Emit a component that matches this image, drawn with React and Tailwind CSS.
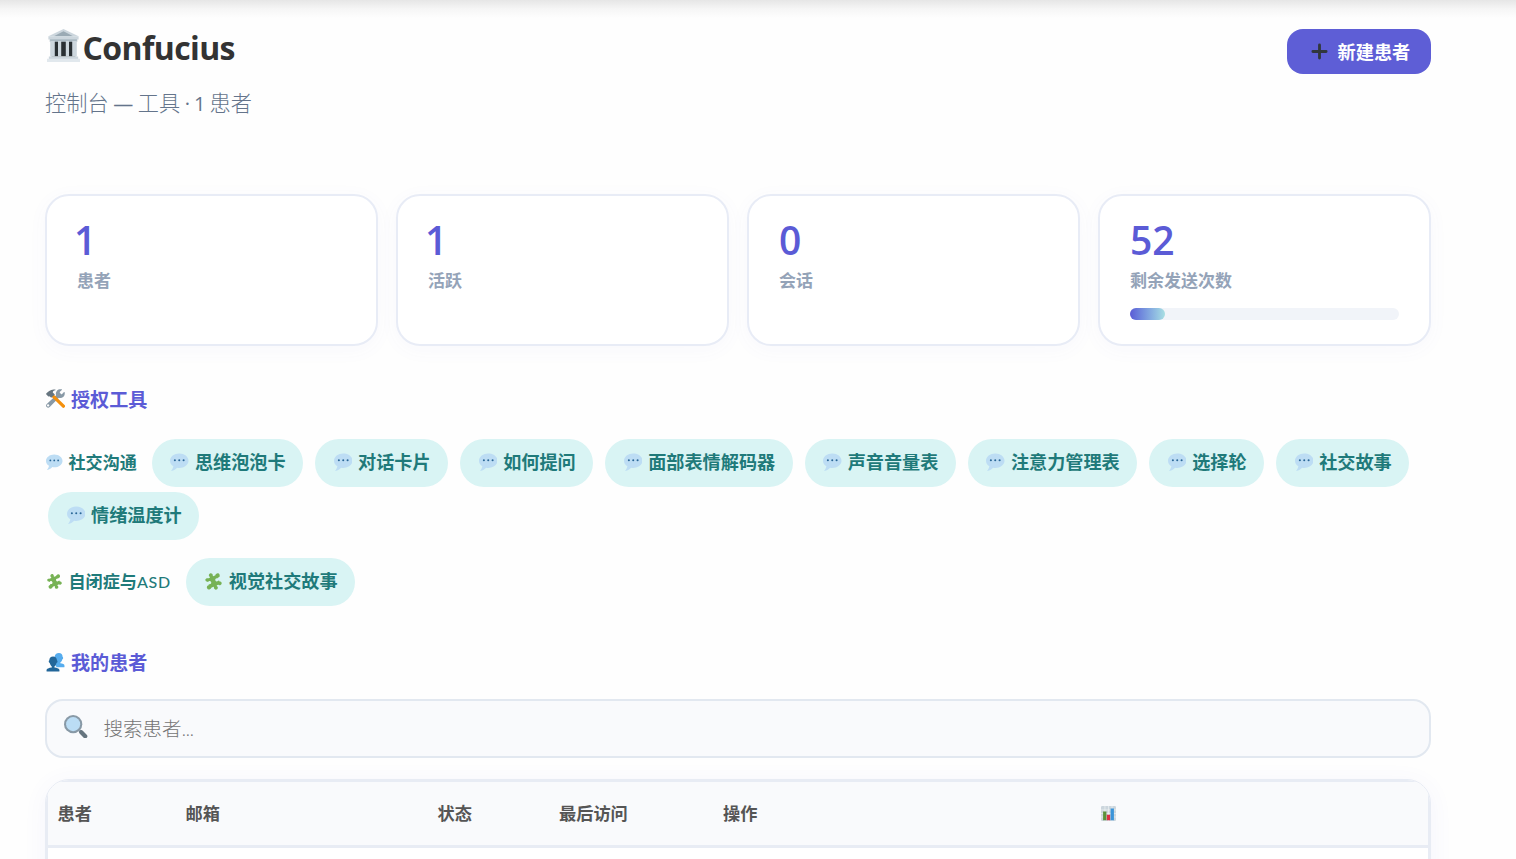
import React from "react";

const Bubble = ({ className }) => (
  <svg viewBox="0 0 36 36" className={className}>
    <path fill="#BDDDF4" d="M18 1C8.059 1 0 7.268 0 15c0 4.368 2.574 8.268 6.604 10.835C6.08 28.144 4.859 31.569 2 35c5.758-.96 9.439-3.761 11.716-6.416 1.376.262 2.805.416 4.284.416 9.941 0 18-6.268 18-14S27.941 1 18 1z" />
    <circle cx="9.5" cy="14" r="2" fill="#2A6797" />
    <circle cx="18" cy="14" r="2" fill="#2A6797" />
    <circle cx="26.5" cy="14" r="2" fill="#2A6797" />
  </svg>
);

const Puzzle = ({ className }) => (
  <svg viewBox="0 0 36 36" className={className}>
    <g fill="#77B255" transform="rotate(-22 18 18)">
      <path d="M7 9h7.500c.8-1 .2-1.600-.1-2.400C13.500 4 15.500 1.500 18 1.500s4.500 2.500 3.600 5.100c-.3.800-.9 1.400-.1 2.400H29v6c-.8.8-1.600.3-2.400 0-2.300-.8-4.100.8-4.100 3s1.800 3.800 4.100 3c.8-.3 1.600-.8 2.400 0v7h-7.500c-.8 1-.2 1.600.1 2.400.9 2.600-1.100 5.100-3.600 5.100s-4.500-2.500-3.600-5.100c.3-.8.9-1.400.1-2.400H7v-7c.8-.8 1.600-.3 2.400 0 2.300.8 4.100-.8 4.100-3s-1.800-3.800-4.100-3c-.8.3-1.600.8-2.400 0z" />
      <circle cx="6" cy="26" r="4.200" />
      <circle cx="30" cy="11" r="4.200" />
      <circle cx="28.500" cy="26.500" r="3.500" />
      <circle cx="7.500" cy="11" r="3" />
    </g>
  </svg>
);

const Tools = ({ className }) => (
  <svg viewBox="0 0 36 36" className={className}>
    <path fill="#8899A6" d="M35.300 6.200c-.2-.7-.8-.8-1.200-.4l-3.600 3.500c-.6.6-1.500.6-2.100 0l-2-2c-.6-.6-.6-1.500 0-2.100L30 1.700c.5-.5.300-1.100-.3-1.200-3.300-.7-6.800.1-9 2.600-2.200 2.500-2.600 5.700-1.500 8.600L1.500 28.500c-1.800 1.700-1.800 4.300-.2 5.800 1.600 1.600 4.200 1.500 5.800-.2l17.200-17.500c2.900 1.100 6.300.5 8.600-1.800 2.300-2.300 3.100-5.600 2.400-8.600zM5.500 32.500a2 2 0 1 1-2.900-2.900 2 2 0 0 1 2.900 2.900z" />
    <path fill="#F4900C" d="m9.500 13.500 4-4L35.200 30.200a3.100 3.100 0 0 1-4.500 4.500z" />
    <path fill="#66757F" d="m9.800 16.500-2.900-2.800c-.8.700-2 .9-2.800.1l-3.400-3.400c-.6-.6-.5-1.600.2-2.300 2.500-3 8.500-8.700 16.500-7.100 1 .2.900 1.300 0 1.400-3 .4-4.400 2.200-4.600 4.100l4 4z" />
  </svg>
);

const People = ({ className }) => (
  <svg viewBox="0 0 36 36" className={className}>
    <path fill="#55ACEE" d="M27 19.500V18c2-1.400 3.300-3.300 3.700-5.800.9 0 1.800-1 1.800-2.600 0-1.200-.5-2-1.100-2.400C31.500 3 28.800 0 24.500 0 20 0 16.500 3 16.500 7.300v10.500c0 4 3 9.200 6 9.200H34c.6 0 1-.4 1-1v-2c0-3-3.500-4-8-4.500z" />
    <path fill="#226699" d="M16 27.500v-2c2-1.400 3.500-3.900 4-6.800.9-.1 1.800-1.200 1.800-2.700 0-1.200-.5-2-1.100-2.400C20.700 9.300 17.700 6.500 13.400 6.500S6.200 9.300 6.300 13.600c-.6.400-1.100 1.200-1.100 2.400 0 1.500.9 2.600 1.800 2.700.5 2.900 1.900 5.400 4 6.800v2C5.500 28.300 1 29.500 1 32.500V34c0 .6.400 1 1 1h22.500c.6 0 1-.4 1-1v-1.500c0-3-4-4.200-9.500-5z" />
  </svg>
);

const Magnifier = ({ className }) => (
  <svg viewBox="0 0 36 36" className={className}>
    <path d="m23.500 23.500 4 4" stroke="#8899A6" strokeWidth="4" />
    <path d="m26.500 26.500 6 6" stroke="#66757F" strokeWidth="6.500" strokeLinecap="round" />
    <circle cx="14" cy="14" r="14" fill="#8899A6" />
    <circle cx="14" cy="14" r="10.800" fill="#BBDDF5" />
  </svg>
);

const Temple = ({ className }) => (
  <svg viewBox="0 0 36 36" className={className}>
    <path fill="#292F33" d="M5 12h26v18H5z" />
    <path fill="#AAB8C2" d="M3 11h30v3H3z" />
    <path fill="#CCD6DD" d="M18 0 1.500 8h33z" />
    <path fill="#9AAAB4" d="M18 2.500 7.500 8h21z" />
    <path fill="#CCD6DD" d="M1.500 8h33v3.500h-33zM3.500 12h5v18h-5zM12 13h3.500v17H12zM20.500 13H24v17h-3.500zM27.500 12h5v18h-5z" />
    <path fill="#AAB8C2" d="M3.500 11.500h29V13h-29z" />
    <path fill="#CCD6DD" d="M2 30h32v3H2z" />
    <path fill="#E1E8ED" d="M0 32.500h36V36H0z" />
  </svg>
);

const Chart = ({ className }) => (
  <svg viewBox="0 0 36 36" className={className}>
    <rect width="36" height="36" rx="3" fill="#CCD6DD" />
    <path stroke="#F1F4F6" strokeWidth="1.500" d="M0 9.500h36M0 18h36M0 26.500h36M9.500 0v36M18 0v36M26.500 0v36" />
    <path fill="#5C913B" d="M5 13h8v21H5z" />
    <path fill="#DD2E44" d="M14 21h8v13h-8z" />
    <path fill="#3B94D9" d="M23 6h8v28h-8z" />
  </svg>
);

const Pill = ({ Icon, text }) => (
  <span className="flex h-[47.5px] shrink-0 items-center rounded-full bg-[#d9f4f4] pr-[17.500px] pl-[18.500px] text-[18.150px] font-bold text-[#1f7a7a]">
    <Icon className="mr-[6px] mb-[1.500px] h-[18.500px] w-[18.500px] shrink-0" />
    <span>{text}</span>
  </span>
);

const Stat = ({ value, label, children }) => (
  <div className="h-[152px] rounded-[24px] border-2 border-[#e8ecf6] bg-white px-[30px] pt-[21px] shadow-[0_4px_20px_rgba(91,91,214,0.04)]">
    <div className={"h-[46px] text-[39px] leading-[46px] font-[650] text-[#5b5bd6] " + (value === "1" ? "-ml-[3px]" : "")}>{value}</div>
    <div className="mt-[5px] h-[26px] text-[17px] leading-[26px] font-bold text-[#94a3b8]">{label}</div>
    {children}
  </div>
);

const socialTools = ["思维泡泡卡", "对话卡片", "如何提问", "面部表情解码器", "声音音量表", "注意力管理表", "选择轮", "社交故事"];

export default function App() {
  return (
    <div className="h-[859px] w-full overflow-hidden bg-[#fefefe] font-['Open_Sans','Noto_Sans_CJK_SC',sans-serif]">
      <div className="h-[18px] bg-linear-to-b from-[#e6e6e6] via-[#f6f6f6] to-[#fefefe]" />
      <main className="ml-[45px] w-[1386px]">
        <header className="flex h-[176px] items-start justify-between pt-[11px]">
          <div>
            <h1 className="flex h-[38px] items-center text-[32px] leading-[38px] font-bold tracking-[-0.6px] text-[#333]">
              <Temple className="mr-[2.500px] mb-[5px] ml-[2px] h-[33px] w-[33px]" />
              Confucius
            </h1>
            <p className="mt-[20px] text-[21.200px] leading-[32px] font-light text-[#64748b]">
              控制台<span className="text-[20px] font-normal tracking-[-0.4px]"> — </span>工具<span className="text-[20px] font-normal tracking-[-0.6px]"> · 1 </span>患者
            </p>
          </div>
          <button className="flex h-[45px] w-[144px] items-center rounded-[16px] bg-[#5e5ed6] pl-[23.500px] text-[18.200px] font-bold text-white">
            <svg viewBox="0 0 18 18" className="mr-[10px] h-[17px] w-[17px]">
              <path d="M9 2v14M2 9h14" stroke="#31373d" strokeWidth="3" strokeLinecap="round" />
            </svg>
            <span className="pt-[3px]">新建患者</span>
          </button>
        </header>

        <section className="grid grid-cols-4 gap-[18px]">
          <Stat value="1" label="患者" />
          <Stat value="1" label="活跃" />
          <Stat value="0" label="会话" />
          <Stat value="52" label="剩余发送次数">
            <div className="mt-[14px] h-[12px] rounded-full bg-[#f1f4f9]">
              <div className="h-full w-[13%] rounded-full bg-linear-to-r from-[#5b5bd6] to-[#a8dfe2]" />
            </div>
          </Stat>
        </section>

        <h2 className="mt-[39px] flex h-[30px] items-center text-[19.100px] font-bold text-[#5b5bd6]">
          <Tools className="mr-[6px] mb-[3px] ml-px h-[19px] w-[19px]" />
          授权工具
        </h2>
        <div className="mt-[24px] flex flex-wrap items-center gap-x-[12px] gap-y-[5.500px]">
          <span className="mr-[3px] flex items-center text-[17.100px] font-bold text-[#1f7a7a]">
            <Bubble className="mr-[6px] mb-px ml-px h-[16.500px] w-[16.500px]" />
            <span className="pt-px">社交沟通</span>
          </span>
          {socialTools.map((t) => (
            <Pill key={t} Icon={Bubble} text={t} />
          ))}
          <div className="ml-[3px]">
            <Pill Icon={Bubble} text="情绪温度计" />
          </div>
        </div>
        <div className="mt-[18.500px] flex items-center gap-[15px]">
          <span className="flex items-center text-[17.100px] font-bold text-[#1f7a7a]">
            <Puzzle className="mr-[6px] mb-px ml-px h-[16.500px] w-[16.500px]" />
            <span className="pt-px">
              自闭症与<span className="font-[Lato,sans-serif] text-[16px] font-medium tracking-[0.700px]">ASD</span>
            </span>
          </span>
          <Pill Icon={Puzzle} text="视觉社交故事" />
        </div>

        <h2 className="mt-[42.500px] flex h-[30px] items-center text-[19.100px] font-bold text-[#5b5bd6]">
          <People className="mr-[6px] mb-[2px] ml-px h-[19px] w-[19px]" />
          我的患者
        </h2>
        <div className="mt-[21px] flex h-[59px] items-center rounded-[18px] border-2 border-[#e2e8f0] bg-[#f9fafc] pl-[17px] text-[19.500px] font-light text-[#757575]">
          <Magnifier className="mr-[16px] mb-[4px] h-[23.500px] w-[23.500px]" />
          <span>搜索患者<span className="tracking-[-0.7px]">...</span></span>
        </div>

        <div className="mt-[21px] h-[120px] overflow-hidden rounded-[24px] border border-[#e8ecf4] bg-white shadow-[0_4px_24px_rgba(91,91,214,0.06)]">
          <div className="h-full border-2 border-[#e8ecf4]">
            <div className="grid h-[66px] grid-cols-[128px_252px_121px_164px_377px_1fr] items-center border-b-3 border-[#e8ecf4] bg-[#f9fafc] text-[17.200px] font-bold text-[#555]">
              <div className="pl-[9.500px]">患者</div>
              <div className="pl-[9.500px]">邮箱</div>
              <div className="pl-[9.500px]">状态</div>
              <div className="pl-[10px]">最后访问</div>
              <div className="pl-[10px]">操作</div>
              <div className="pl-[10.500px]"><Chart className="mb-px h-[15px] w-[15px]" /></div>
            </div>
          </div>
        </div>
      </main>
    </div>
  );
}
